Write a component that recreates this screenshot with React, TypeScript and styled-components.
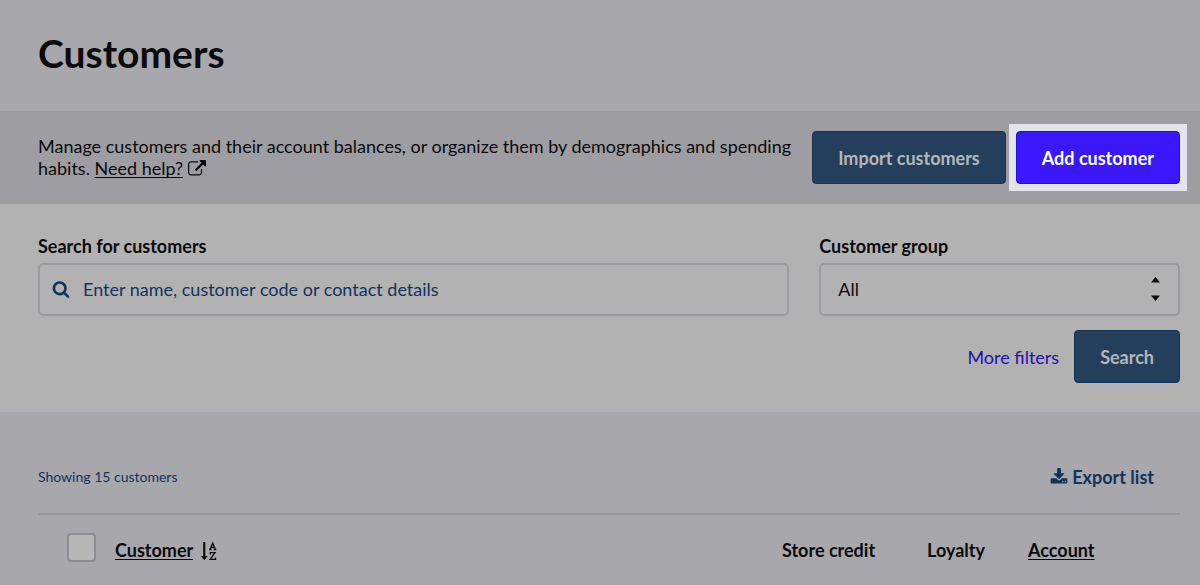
import React from "react";
import styled, { createGlobalStyle, css } from "styled-components";

const color = {
  page: "#a8a7ac",
  band: "#9e9da2",
  panel: "#b2b2b2",
  line: "#97969b",
  fieldLine: "#9b9aa2",
  ink: "#0b0b0d",
  navy: "#12335c",
  button: "#233f5c",
  buttonLine: "#15345a",
  buttonText: "#b5b6b9",
  primary: "#3a18ff",
  primaryLine: "#2208f0",
  halo: "#e4e5ec",
  link: "#2410b0",
};

const GlobalStyle = createGlobalStyle`
  *, *::before, *::after { box-sizing: border-box; }
  body {
    margin: 0;
    background: ${color.page};
    color: ${color.ink};
    font: 400 18px/22px Lato, "Liberation Sans", sans-serif;
  }
`;

const Header = styled.header`
  padding: 29px 20px 34px 38px;
`;

const Title = styled.h1`
  margin: 0;
  font-size: 39px;
  line-height: 48px;
  font-weight: 700;
`;

const Toolbar = styled.section`
  display: flex;
  align-items: center;
  gap: 20px;
  padding: 20px 20px 20px 38px;
  background: ${color.band};
`;

const Intro = styled.p`
  flex: 1;
  margin: 0;
  padding-bottom: 2px;
`;

const TextLink = styled.a<{ $tone?: "link"; $underline?: boolean }>`
  color: ${(p) => (p.$tone === "link" ? color.link : "inherit")};
  text-decoration: ${(p) => (p.$underline ? "underline" : "none")};
  text-decoration-thickness: 1px;
  text-underline-offset: 2px;
  text-decoration-skip-ink: none;
`;

const Actions = styled.div`
  display: flex;
  gap: 10px;
`;

const Button = styled.button<{ $primary?: boolean }>`
  height: 53px;
  padding: 0 25px;
  border: 1px solid ${color.buttonLine};
  border-radius: 4px;
  background: ${color.button};
  color: ${color.buttonText};
  font: inherit;
  font-weight: 700;
  white-space: nowrap;
  cursor: pointer;
  ${(p) =>
    p.$primary &&
    css`
      border-color: ${color.primaryLine};
      background: ${color.primary};
      color: #fff;
    `}
`;

const Spotlight = styled.div`
  display: flex;
  background: ${color.halo};
  box-shadow: 0 0 0 7px ${color.halo};
`;

const Filters = styled.form`
  padding: 31px 20px 29px 38px;
  background: ${color.panel};
`;

const FilterGrid = styled.div`
  display: grid;
  grid-template-columns: repeat(3, minmax(0, 1fr));
  gap: 30px;
`;

const Field = styled.div<{ $span?: number }>`
  grid-column: span ${(p) => p.$span ?? 1};
`;

const Label = styled.label`
  display: block;
  margin-bottom: 6px;
  font-weight: 700;
`;

const Control = styled.div`
  display: flex;
  align-items: center;
  gap: 13px;
  height: 53px;
  padding: 0 18px 2px 12px;
  border: 2px solid ${color.fieldLine};
  border-radius: 5px;
  color: ${color.navy};
`;

const SearchInput = styled.input`
  flex: 1;
  min-width: 0;
  padding: 0;
  border: 0;
  outline: 0;
  background: transparent;
  color: inherit;
  font: inherit;
  &::placeholder {
    color: inherit;
    opacity: 1;
  }
`;

const SelectControl = styled(Control)`
  padding: 0 18px 2px 17px;
  color: ${color.ink};
`;

const Select = styled.select`
  appearance: none;
  flex: 1;
  min-width: 0;
  padding: 0;
  border: 0;
  outline: 0;
  background: transparent;
  color: inherit;
  font: inherit;
`;

const FilterActions = styled.div`
  display: flex;
  align-items: center;
  justify-content: flex-end;
  gap: 15px;
  margin-top: 14px;
`;

const Summary = styled.div`
  display: flex;
  align-items: center;
  justify-content: space-between;
  padding: 0 26px 25px 0;
`;

const Count = styled.p`
  margin: 0;
  color: ${color.navy};
  font-size: 14px;
`;

const ExportButton = styled.button`
  display: flex;
  align-items: center;
  gap: 4px;
  padding: 0;
  border: 0;
  background: none;
  color: ${color.navy};
  font: inherit;
  font-weight: 700;
  cursor: pointer;
`;

const Results = styled.main`
  padding: 54px 20px 0 38px;
`;

const Table = styled.table`
  width: 100%;
  border-collapse: collapse;
  table-layout: fixed;
  border-top: 2px solid ${color.line};
`;

const HeadCell = styled.th<{ $width?: number }>`
  width: ${(p) => (p.$width ? `${p.$width}px` : "auto")};
  height: 70px;
  padding: 0;
  font-weight: 700;
  text-align: left;
  vertical-align: middle;
  white-space: nowrap;
`;

const Checkbox = styled.input`
  appearance: none;
  display: block;
  width: 29px;
  height: 29px;
  margin: 0 0 4px 29px;
  border: 2px solid #8d8c92;
  border-radius: 4px;
  background: #b7b7b8;
`;

const Icon = styled.svg<{ $size: number }>`
  flex: none;
  width: ${(p) => p.$size}px;
  height: ${(p) => p.$size}px;
  fill: currentColor;
  overflow: visible;
`;

const InlineIcon = styled(Icon)`
  vertical-align: -3px;
`;

const SortGlyph = styled(InlineIcon)`
  margin-left: 3px;
`;

const Stepper = styled.svg`
  flex: none;
  width: 9px;
  height: 25px;
  fill: currentColor;
`;

const paths = {
  external:
    "M1408 928v320q0 119-84.5 203.5t-203.5 84.5h-832q-119 0-203.5-84.5t-84.5-203.5v-832q0-119 84.5-203.5t203.5-84.5h704q14 0 23 9t9 23v64q0 14-9 23t-23 9h-704q-66 0-113 47t-47 113v832q0 66 47 113t113 47h832q66 0 113-47t47-113v-320q0-14 9-23t23-9h64q14 0 23 9t9 23zm384-864v512q0 26-19 45t-45 19-45-19l-176-176-652 652q-10 10-23 10t-23-10l-114-114q-10-10-10-23t10-23l652-652-176-176q-19-19-19-45t19-45 45-19h512q26 0 45 19t19 45z",
  search:
    "M1216 832q0-185-131.5-316.5t-316.5-131.5-316.5 131.5-131.5 316.5 131.5 316.5 316.5 131.5 316.5-131.5 131.5-316.5zm512 832q0 52-38 90t-90 38q-54 0-90-38l-343-342q-179 124-399 124-143 0-273.5-55.5t-225-150-150-225-55.5-273.5 55.5-273.5 150-225 225-150 273.5-55.5 273.5 55.5 225 150 150 225 55.5 273.5q0 220-124 399l343 343q37 37 37 90z",
  download:
    "M1344 1344q0-26-19-45t-45-19-45 19-19 45 19 45 45 19 45-19 19-45zm256 0q0-26-19-45t-45-19-45 19-19 45 19 45 45 19 45-19 19-45zm128-224v320q0 40-28 68t-68 28h-1472q-40 0-68-28t-28-68v-320q0-40 28-68t68-28h465l135 136q58 56 136 56t136-56l136-136h464q40 0 68 28t28 68zm-325-569q17 41-14 70l-448 448q-18 19-45 19t-45-19l-448-448q-31-29-14-70 17-39 59-39h256v-448q0-26 19-45t45-19h256q26 0 45 19t19 45v448h256q42 0 59 39z",
};

const SortIcon = () => (
  <SortGlyph $size={18} viewBox="0 0 18 18" aria-hidden="true">
    <path d="M3.200 0h2.100v14h2.500L4.250 18 .7 14h2.500z" />
    <g fill="none" stroke="currentColor" strokeWidth="1.300">
      <path d="M10.200 7.300 12.700 1 15.200 7.300M11 5.300h3.400M9.200 7.500h2.500M13.700 7.500h2.500" />
      <path d="M10.300 12.400v-1.700h4.700L10.200 17.300h5.300v-1.800" />
    </g>
  </SortGlyph>
);

export default function App() {
  return (
    <>
      <GlobalStyle />
      <Header>
        <Title>Customers</Title>
      </Header>

      <Toolbar>
        <Intro>
          Manage customers and their account balances, or organize them by demographics and
          spending habits.{" "}
          <TextLink href="#help" $underline>
            Need help?
          </TextLink>{" "}
          <InlineIcon $size={18} viewBox="0 0 1792 1792" aria-hidden="true">
            <path d={paths.external} />
          </InlineIcon>
        </Intro>
        <Actions>
          <Button type="button">Import customers</Button>
          <Spotlight>
            <Button type="button" $primary>
              Add customer
            </Button>
          </Spotlight>
        </Actions>
      </Toolbar>

      <Filters onSubmit={(e) => e.preventDefault()}>
        <FilterGrid>
          <Field $span={2}>
            <Label htmlFor="query">Search for customers</Label>
            <Control>
              <Icon $size={18} viewBox="0 0 1792 1792" aria-hidden="true">
                <path d={paths.search} />
              </Icon>
              <SearchInput
                id="query"
                type="text"
                placeholder="Enter name, customer code or contact details"
              />
            </Control>
          </Field>
          <Field>
            <Label htmlFor="group">Customer group</Label>
            <SelectControl>
              <Select id="group" defaultValue="all">
                <option value="all">All</option>
              </Select>
              <Stepper viewBox="0 0 9 25" aria-hidden="true">
                <path d="M0 6.500 4.500 1 9 6.500zM0 19.500h9l-4.500 5.500z" />
              </Stepper>
            </SelectControl>
          </Field>
        </FilterGrid>
        <FilterActions>
          <TextLink href="#filters" $tone="link">
            More filters
          </TextLink>
          <Button type="submit">Search</Button>
        </FilterActions>
      </Filters>

      <Results>
        <Summary>
          <Count>Showing 15 customers</Count>
          <ExportButton type="button">
            <Icon $size={18} viewBox="0 0 1792 1792" aria-hidden="true">
              <path d={paths.download} />
            </Icon>
            Export list
          </ExportButton>
        </Summary>
        <Table>
          <thead>
            <tr>
              <HeadCell $width={77}>
                <Checkbox type="checkbox" aria-label="Select all customers" />
              </HeadCell>
              <HeadCell>
                <TextLink href="#customer" $underline>
                  Customer
                </TextLink>{" "}
                <SortIcon />
              </HeadCell>
              <HeadCell $width={145}>Store credit</HeadCell>
              <HeadCell $width={101}>Loyalty</HeadCell>
              <HeadCell $width={152}>
                <TextLink href="#account" $underline>
                  Account
                </TextLink>
              </HeadCell>
            </tr>
          </thead>
        </Table>
      </Results>
    </>
  );
}
